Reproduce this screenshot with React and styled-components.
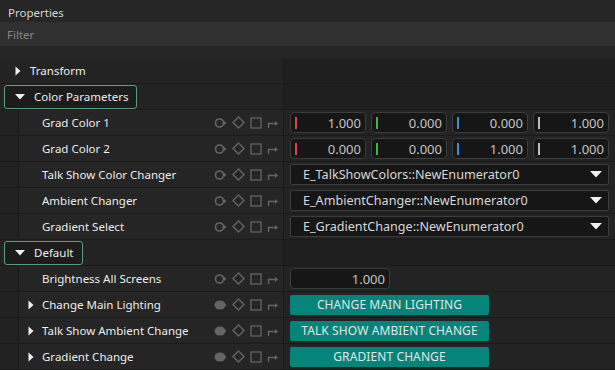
import styled, { createGlobalStyle } from 'styled-components';

const GlobalStyle = createGlobalStyle`
  html, body {
    margin: 0;
    padding: 0;
    background: #1f1f1f;
  }
  body {
    font-family: "Noto Sans", "Open Sans", sans-serif;
    font-size: 11.5px;
    color: #e6e6e6;
  }
`;

/* Styled Components */
const Panel = styled.div`
  width: 615px;
  height: 370px;
  overflow: hidden;
  display: flex;
  flex-direction: column;
  background: #1f1f1f;
`;

const Header = styled.div`
  height: 22px;
  box-sizing: border-box;
  display: flex;
  align-items: center;
  padding: 3px 0 0 8px;
  background: #262626;
  color: #d4d4d4;
`;

const FilterBar = styled.div`
  height: 24px;
  box-sizing: border-box;
  display: flex;
  align-items: center;
  padding: 1px 0 0 7px;
  background: #303030;
  color: #878787;
`;

const Gap = styled.div`
  height: 12px;
  background: #262626;
`;

const Row = styled.div`
  height: 26px;
  display: grid;
  grid-template-columns: 283px 1fr;
  border-bottom: 1px solid #1a1a1a;
  box-sizing: border-box;
`;

const CategoryCell = styled.div`
  display: flex;
  align-items: center;
  padding-left: 4px;
  background: #232323;
`;

const CategoryBox = styled.div`
  height: 24px;
  box-sizing: border-box;
  display: flex;
  align-items: center;
  gap: 9px;
  padding: 0 8px 0 10px;
  border: 1px solid ${(p) => (p.$active ? '#5c9d7e' : 'transparent')};
  border-radius: 3px;
  background: ${(p) => (p.$active ? '#1c1c1c' : 'transparent')};
  color: #ededed;
`;

const NameCell = styled.div`
  display: flex;
  align-items: center;
  background: #252525;
  border-left: 18px solid #222222;
  box-shadow: inset 1px 0 0 #1a1a1a;
  padding-right: 4px;
`;

const Expander = styled.div`
  width: 24px;
  display: flex;
  justify-content: center;
  padding-left: 2px;
  box-sizing: border-box;
`;

const Name = styled.div`
  flex: 1;
  color: #ececec;
  white-space: nowrap;
`;

const Icons = styled.div`
  display: flex;
  align-items: center;
  gap: 5px;
  color: #656565;
`;

const ValueCell = styled.div`
  display: flex;
  align-items: center;
  gap: 5px;
  padding: 0 6px 0 7px;
  background: ${(p) => (p.$empty ? '#1f1f1f' : '#232323')};
  box-shadow: inset 1px 0 0 #1a1a1a;
`;

const NumberBox = styled.div`
  flex: ${(p) => (p.$fixed ? '0 0 100px' : '1')};
  height: 21px;
  box-sizing: border-box;
  display: flex;
  align-items: center;
  padding: 0 4px 0 4px;
  border: 1px solid #3c3c3c;
  border-radius: 4px;
  background: #161616;
  color: #c4c4c4;
  font-size: 13px;
`;

const Tick = styled.span`
  width: 2px;
  height: 12px;
  background: ${(p) => p.$color};
`;

const NumberText = styled.span`
  flex: 1;
  text-align: right;
`;

const Select = styled.div`
  flex: 1;
  height: 21px;
  box-sizing: border-box;
  display: flex;
  align-items: center;
  justify-content: space-between;
  padding: 0 6px 0 12px;
  border: 1px solid #3c3c3c;
  border-radius: 2px;
  background: #161616;
  color: #d8d8d8;
  font-size: 12.6px;
`;

const ActionButton = styled.button`
  width: 199px;
  height: 20px;
  border: none;
  border-radius: 2px;
  padding: 0;
  background: #05857a;
  color: #e4e4e4;
  font-family: inherit;
  font-size: 12px;
  letter-spacing: 0.1px;
`;

/* Icons */
const ArrowRight = () => (
  <svg width="6" height="10" viewBox="0 0 6 10">
    <path d="M0.5 0.5 L5.5 5 L0.5 9.5 Z" fill="#f0f0f0" />
  </svg>
);

const ArrowDown = () => (
  <svg width="10" height="6" viewBox="0 0 10 6">
    <path d="M0 0 L10 0 L5 5.5 Z" fill="#f0f0f0" />
  </svg>
);

const ResetIcon = ({ filled }) => (
  <svg width="13" height="12" viewBox="0 0 13 12">
    {filled ? (
      <ellipse cx="6" cy="6" rx="5.5" ry="4.5" fill="currentColor" />
    ) : (
      <circle cx="5.5" cy="6" r="4" fill="none" stroke="currentColor" strokeWidth="1.6" />
    )}
    <path d="M9.5 3.5 L12.5 6 L9.5 8.5 Z" fill="currentColor" />
  </svg>
);

const KeyIcon = () => (
  <svg width="13" height="13" viewBox="0 0 13 13">
    <path d="M6.5 1 L12 6.5 L6.5 12 L1 6.5 Z" fill="none" stroke="currentColor" strokeWidth="1.4" />
  </svg>
);

const SquareIcon = () => (
  <svg width="12" height="12" viewBox="0 0 12 12">
    <rect x="1" y="1" width="10" height="10" fill="none" stroke="currentColor" strokeWidth="1.3" />
  </svg>
);

const LinkIcon = () => (
  <svg width="12" height="12" viewBox="0 0 12 12">
    <path d="M1.5 11 V6.5 H8.5" fill="none" stroke="currentColor" strokeWidth="1.4" />
    <path d="M8 4 L11 6.5 L8 9 Z" fill="currentColor" />
  </svg>
);

const SelectArrow = () => (
  <svg width="12" height="7" viewBox="0 0 12 7">
    <path d="M0 0 L12 0 L6 6.5 Z" fill="#f2f2f2" />
  </svg>
);

/* Data */
const TICKS = ['#e04343', '#3db843', '#2c8fdf', '#bdbdbd'];

const COLOR_ROWS = [
  { name: 'Grad Color 1', values: ['1.000', '0.000', '0.000', '1.000'] },
  { name: 'Grad Color 2', values: ['0.000', '0.000', '1.000', '1.000'] },
];

const ENUM_ROWS = [
  { name: 'Talk Show Color Changer', value: 'E_TalkShowColors::NewEnumerator0' },
  { name: 'Ambient Changer', value: 'E_AmbientChanger::NewEnumerator0' },
  { name: 'Gradient Select', value: 'E_GradientChange::NewEnumerator0' },
];

const BUTTON_ROWS = [
  { name: 'Change Main Lighting', label: 'CHANGE MAIN LIGHTING' },
  { name: 'Talk Show Ambient Change', label: 'TALK SHOW AMBIENT CHANGE' },
  { name: 'Gradient Change', label: 'GRADIENT CHANGE' },
];

/* Components */
function Category({ label, open }) {
  return (
    <Row>
      <CategoryCell>
        <CategoryBox $active={open}>
          {open ? <ArrowDown /> : <ArrowRight />}
          <span>{label}</span>
        </CategoryBox>
      </CategoryCell>
      <ValueCell $empty />
    </Row>
  );
}

function Property({ name, expandable, filledReset, children }) {
  return (
    <Row>
      <NameCell>
        <Expander>{expandable && <ArrowRight />}</Expander>
        <Name>{name}</Name>
        <Icons>
          <ResetIcon filled={filledReset} />
          <KeyIcon />
          <SquareIcon />
          <LinkIcon />
        </Icons>
      </NameCell>
      <ValueCell>{children}</ValueCell>
    </Row>
  );
}

function App() {
  return (
    <>
      <GlobalStyle />
      <Panel>
        <Header>Properties</Header>
        <FilterBar>Filter</FilterBar>
        <Gap />

        <Category label="Transform" />
        <Category label="Color Parameters" open />

        {COLOR_ROWS.map((row) => (
          <Property key={row.name} name={row.name}>
            {row.values.map((v, i) => (
              <NumberBox key={i}>
                <Tick $color={TICKS[i]} />
                <NumberText>{v}</NumberText>
              </NumberBox>
            ))}
          </Property>
        ))}

        {ENUM_ROWS.map((row) => (
          <Property key={row.name} name={row.name}>
            <Select>
              <span>{row.value}</span>
              <SelectArrow />
            </Select>
          </Property>
        ))}

        <Category label="Default" open />

        <Property name="Brightness All Screens">
          <NumberBox $fixed>
            <NumberText>1.000</NumberText>
          </NumberBox>
        </Property>

        {BUTTON_ROWS.map((row) => (
          <Property key={row.name} name={row.name} expandable filledReset>
            <ActionButton>{row.label}</ActionButton>
          </Property>
        ))}
      </Panel>
    </>
  );
}

export default App;
